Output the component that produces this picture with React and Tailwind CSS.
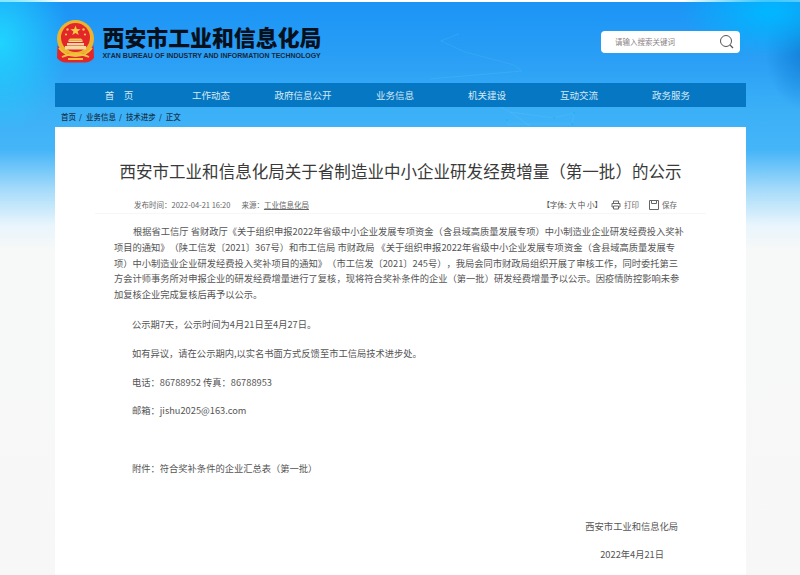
import React from 'react'

const cjk = 'font-["Noto_Sans_CJK_SC",sans-serif]'

const navItems = ['首　页', '工作动态', '政府信息公开', '业务信息', '机关建设', '互动交流', '政务服务']

const introLines = [
  '根据省工信厅 省财政厅《关于组织申报2022年省级中小企业发展专项资金（含县域高质量发展专项）中小制造业企业研发经费投入奖补',
  '项目的通知》（陕工信发〔2021〕367号）和市工信局 市财政局 《关于组织申报2022年省级中小企业发展专项资金（含县域高质量发展专',
  '项）中小制造业企业研发经费投入奖补项目的通知》（市工信发〔2021〕245号），我局会同市财政局组织开展了审核工作，同时委托第三',
  '方会计师事务所对申报企业的研发经费增量进行了复核，现将符合奖补条件的企业（第一批）研发经费增量予以公示。因疫情防控影响未参',
  '加复核企业完成复核后再予以公示。',
]

function Emblem() {
  return (
    <svg width="39" height="43" viewBox="0 0 39 43" className="shrink-0">
      <circle cx="19.5" cy="18.5" r="18.5" fill="#eeb32c" />
      <circle cx="19.5" cy="17.5" r="14.5" fill="#e3262a" />
      <path d="M19.5 5.5l1.3 3.6 3.8.1-3 2.3 1.1 3.6-3.2-2.1-3.2 2.1 1.1-3.6-3-2.3 3.8-.1z" fill="#f6c843" />
      <circle cx="11.5" cy="9.5" r="1.2" fill="#f6c843" />
      <circle cx="27.5" cy="9.5" r="1.2" fill="#f6c843" />
      <circle cx="10" cy="14.5" r="1.1" fill="#f6c843" />
      <circle cx="29" cy="14.5" r="1.1" fill="#f6c843" />
      <path d="M12.5 20.5h14v1.5h-14zM11 23h17v2.5H11zM9 26h21v3.5H9z" fill="#f3d9a0" />
      <path d="M14 18.5h11l2 2H12z" fill="#f6c843" />
      <path d="M1.5 25c2.5 5 5.5 7.5 10 8.5 3 .7 5.5 1 8 1s5-.3 8-1c4.500-1 7.500-3.500 10-8.500l.5 13c-3 3.500-6 4.500-9 4.500H10c-3 0-6-1-9-4.500z" fill="#e3262a" />
      <path d="M3 28c4 5.500 10 8 16.500 8S32 33.500 36 28M6 37c4-2 8-3 13.500-3S29 35 33 37M12 39h15" fill="none" stroke="#f0c040" strokeWidth="1.800" />
    </svg>
  )
}

function BackgroundNetwork() {
  return (
    <svg width="800" height="230" viewBox="0 0 800 230" className="absolute left-0 top-0 pointer-events-none">
      <g stroke="#7fd4ff" strokeOpacity="0.22" strokeWidth="0.700" fill="none">
        <path d="M458 34L441 41L465 52L514 65L522 71L429 79" />
        <path d="M510 112L554 118L574 113L572 124L507 124" />
        <path d="M480 96L510 112L530 126" />
      </g>
      <g fill="#18b4ea" fillOpacity="0.700">
        <circle cx="458" cy="34" r="1" />
        <circle cx="441" cy="41" r="0.800" />
        <circle cx="465" cy="52" r="0.800" />
        <circle cx="514" cy="65" r="1" />
        <circle cx="522" cy="71" r="1" />
        <circle cx="429" cy="79" r="1" />
        <circle cx="507" cy="120" r="1" />
        <circle cx="554" cy="118" r="1" />
        <circle cx="574" cy="113" r="1" />
        <circle cx="572" cy="124" r="1" />
      </g>
    </svg>
  )
}

function App() {
  return (
    <div className={`${cjk} relative h-[575px] w-[800px] overflow-hidden bg-[radial-gradient(ellipse_70px_90px_at_0px_42px,#1fd4ff_0%,rgba(31,212,255,0)_100%),radial-gradient(ellipse_90px_45px_at_770px_12px,#00b7ff_0%,rgba(0,183,255,0)_100%),radial-gradient(ellipse_40px_60px_at_805px_50px,#1280d8_0%,rgba(18,128,216,0)_100%),linear-gradient(180deg,#ffffff_0px,#ffffff_2px,#1b94f6_2px,#2a9ff5_60px,#3bb0f7_110px,#45b5f8_150px,#a6dbfa_190px,#e8f5fc_225px,#f7f8f8_250px,#f7f7f7_100%)]`}>
      <BackgroundNetwork />

      <div className="relative ml-[55px] flex w-[691px] flex-col">
        {/* header */}
        <div className="flex h-[83px] items-start justify-between pt-[20px] pl-px pr-[6px]">
          <div className="flex gap-[7.5px]">
            <Emblem />
            <div className="flex flex-col pt-[2px]">
              <div className="text-[21.9px] font-black leading-[29px] text-[#07111d] whitespace-nowrap">西安市工业和信息化局</div>
              <div className={'font-["Liberation_Sans",sans-serif] text-[7px] font-bold leading-[9px] text-[#15283c] whitespace-nowrap'}>
                XI'AN BUREAU OF INDUSTRY AND INFORMATION TECHNOLOGY
              </div>
            </div>
          </div>
          <div className="mt-[11px] flex h-[22px] w-[139px] items-center justify-between rounded-[4px] bg-white pl-[14px] pr-[6px]">
            <span className="text-[7.5px] text-[#8a8284] whitespace-nowrap">请输入搜索关键词</span>
            <svg width="15" height="16" viewBox="0 0 15 16" fill="none" stroke="#555" strokeWidth="1">
              <circle cx="7" cy="7" r="5.500" />
              <path d="M11 11l3 3" strokeWidth="1.300" />
            </svg>
          </div>
        </div>

        {/* nav */}
        <nav className="flex h-[24px] items-center bg-[#0678c3] pl-[18px]">
          {navItems.map((item) => (
            <a key={item} className="w-[92px] text-center text-[9.5px] text-[#d6e9f6] whitespace-nowrap">{item}</a>
          ))}
        </nav>

        {/* breadcrumb */}
        <div className="flex h-[20px] items-center gap-[3px] pl-[6px] text-[7.5px] font-medium text-[#17344e] whitespace-nowrap">
          <span>首页</span><span>/</span>
          <span className="ml-[1px]">业务信息</span><span>/</span>
          <span className="ml-[1px]">技术进步</span><span>/</span>
          <span className="ml-[1px]">正文</span>
        </div>

        {/* article */}
        <div className="h-[448px] bg-white">
          <h1 className="pt-[31px] text-center text-[16.55px] font-normal leading-[26px] text-[#3a3a3a] whitespace-nowrap">
            西安市工业和信息化局关于省制造业中小企业研发经费增量（第一批）的公示
          </h1>

          <div className="mx-[40px] mt-[12px] flex h-[18px] items-center justify-between border-b border-[#f7f7f7] pl-[39px] pr-[29px] text-[7.5px] text-[#666]">
            <div className="flex gap-[11px] whitespace-nowrap">
              <span>发布时间：2022-04-21 16:20</span>
              <span>来源：<span className="underline">工业信息化局</span></span>
            </div>
            <div className="flex items-center whitespace-nowrap">
              <span className="text-[#555]">【字体: 大 中 小】</span>
              <svg width="10" height="10" viewBox="0 0 10 10" fill="none" stroke="#666" className="ml-[9px] mr-[3px]">
                <path d="M2.500 3V1h5v2M1 3.500h8v3.500H7.500M1 3.500v3.500h1.500M2.500 6h5v3h-5z" />
              </svg>
              <span>打印</span>
              <svg width="10" height="10" viewBox="0 0 10 10" fill="none" stroke="#666" className="ml-[10px] mr-[3px]">
                <path d="M.5.500h9v9h-9zM2.500.500v3h5v-3" />
              </svg>
              <span>保存</span>
            </div>
          </div>

          <div className="pl-[59px] pt-[10px] text-[9.28px] text-[#555] whitespace-nowrap [text-spacing-trim:space-all]">
            <div className="leading-[15.8px]">
              {introLines.map((line, i) => (
                <div key={i} className={i === 0 ? 'pl-[19px]' : ''}>{line}</div>
              ))}
            </div>
            <div className="flex flex-col gap-[13px] pt-[14px] leading-[15.8px]">
              <div className="pl-[18px]">公示期7天，公示时间为4月21日至4月27日。</div>
              <div className="pl-[18px]">如有异议，请在公示期内,以实名书面方式反馈至市工信局技术进步处。</div>
              <div className="pl-[18px]">电话：86788952 传真：86788953</div>
              <div className="pl-[18px]">邮箱：jishu2025@163.com</div>
              <div className="h-[15.8px]"></div>
              <div className="pl-[18px]">附件：符合奖补条件的企业汇总表（第一批）</div>
              <div className="h-[15.8px]"></div>
              <div className="pr-[68px] text-right">西安市工业和信息化局</div>
              <div className="pr-[82px] text-right">2022年4月21日</div>
            </div>
          </div>
        </div>
      </div>
    </div>
  )
}

export default App
